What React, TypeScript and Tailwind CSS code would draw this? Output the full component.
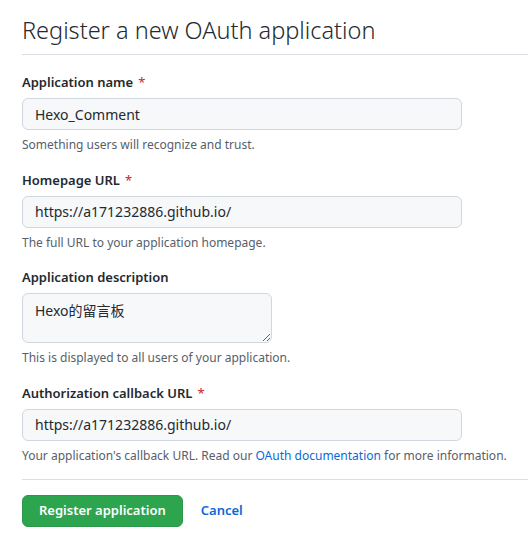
import React from 'react';

const font = { fontFamily: '"Noto Sans", "Noto Sans CJK SC", sans-serif' };

const Label = ({ text, required }: { text: string; required?: boolean }) => (
  <label className="block text-[13px] leading-[21px] font-semibold text-[#24292f] mb-[5px]">
    {text}
    {required && <span className="text-[#cf222e] ml-[5px] font-normal">*</span>}
  </label>
);

const Hint = ({ children }: { children: React.ReactNode }) => (
  <p className="mt-[6px] text-[12px] leading-[18px] text-[#57606a]">{children}</p>
);

const inputCls =
  'block h-[32px] w-[440px] rounded-[6px] border border-[#d0d7de] bg-[#f6f8fa] px-[12px] text-[14px] text-[#24292f] outline-none';

export default function App() {
  return (
    <div className="min-h-screen bg-white pl-[22px] pt-[12px]" style={font}>
      <h1 className="text-[23.5px] leading-[36px] font-light text-[#24292f] pb-[6px] border-b border-[#d8dee4]">
        Register a new OAuth application
      </h1>

      <form className="flex flex-col gap-[15.5px] pt-[17px]">
        <div>
          <Label text="Application name" required />
          <input className={inputCls} readOnly value="Hexo_Comment" />
          <Hint>Something users will recognize and trust.</Hint>
        </div>

        <div>
          <Label text="Homepage URL" required />
          <input className={inputCls} readOnly value="https://a171232886.github.io/" />
          <Hint>The full URL to your application homepage.</Hint>
        </div>

        <div>
          <Label text="Application description" />
          <textarea
            className="block h-[50px] w-[250px] rounded-[6px] border border-[#d0d7de] bg-[#f6f8fa] px-[12px] py-[6px] text-[14px] text-[#24292f] outline-none"
            readOnly
            value="Hexo的留言板"
          />
          <Hint>This is displayed to all users of your application.</Hint>
        </div>

        <div>
          <Label text="Authorization callback URL" required />
          <input className={inputCls} readOnly value="https://a171232886.github.io/" />
          <Hint>
            Your application's callback URL. Read our{' '}
            <a className="text-[#0969da]" href="#">OAuth documentation</a> for more information.
          </Hint>
        </div>
      </form>

      <div className="mt-[14px] border-t border-[#d8dee4] pt-[15px] flex items-center gap-[18px]">
        <button className="h-[32px] rounded-[6px] bg-[#2da44e] px-[16px] text-[13px] font-semibold text-white border border-[#2c974b]">
          Register application
        </button>
        <a className="text-[13px] font-semibold text-[#0969da]" href="#">Cancel</a>
      </div>
    </div>
  );
}
